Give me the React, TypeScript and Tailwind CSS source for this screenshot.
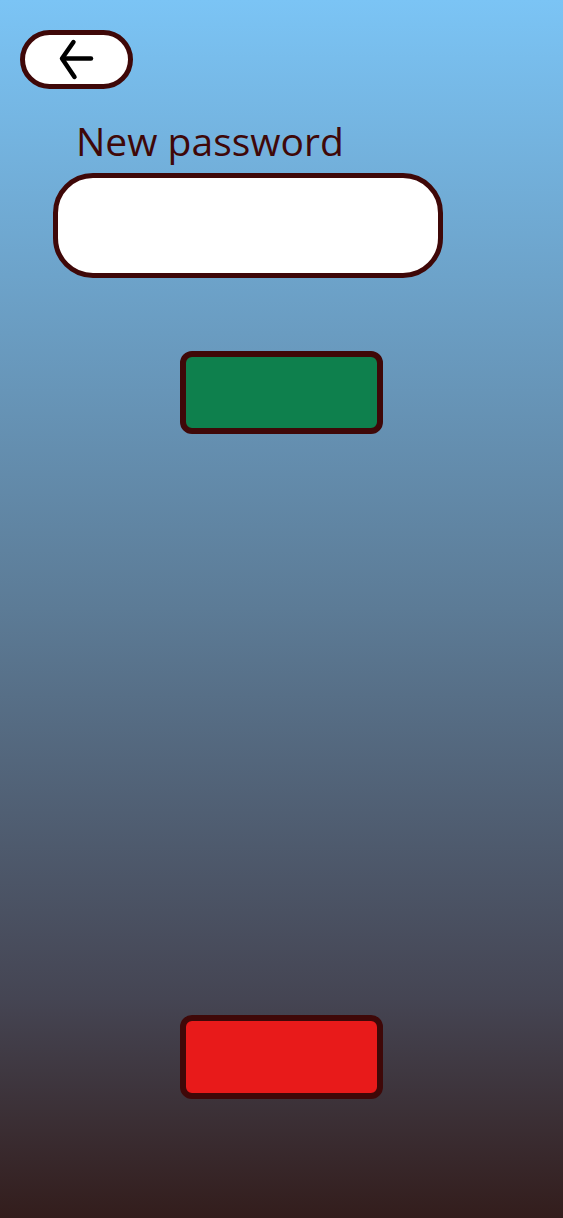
import React from "react";

export default function App() {
  return (
    <div className="w-[563px] h-[1218px] bg-[linear-gradient(to_bottom,#7bc4f5_0%,#5c7b96_50%,#454553_82%,#331d1c_100%)] flex flex-col" style={{ fontFamily: '"Open Sans", "Noto Sans", sans-serif' }}>
      <button className="ml-[20px] mt-[30px] w-[113px] h-[59px] rounded-full border-[5px] border-[#3f0808] bg-white flex items-center justify-center">
        <svg width="40" height="46" viewBox="0 0 40 46" fill="none" stroke="black" strokeWidth="4.5" strokeLinecap="round" strokeLinejoin="round">
          <path d="M34 21.5 H6" />
          <path d="M16.5 5 L5 21.5 L17.5 40" />
        </svg>
      </button>
      <label className="ml-[76px] mt-[27px] text-[39px] leading-[50px] text-[#3f0808]">New password</label>
      <input className="ml-[53px] mt-[7px] w-[390px] h-[105px] rounded-[40px] border-[5px] border-[#3f0808] bg-white outline-none px-6 text-2xl" />
      <button className="ml-[180px] mt-[73px] w-[203px] h-[83px] rounded-[12px] border-[6px] border-[#3f0808] bg-[#0e804d]" />
      <button className="ml-[180px] mt-[581px] w-[203px] h-[84px] rounded-[12px] border-[6px] border-[#3f0808] bg-[#e81a1a]" />
    </div>
  );
}
